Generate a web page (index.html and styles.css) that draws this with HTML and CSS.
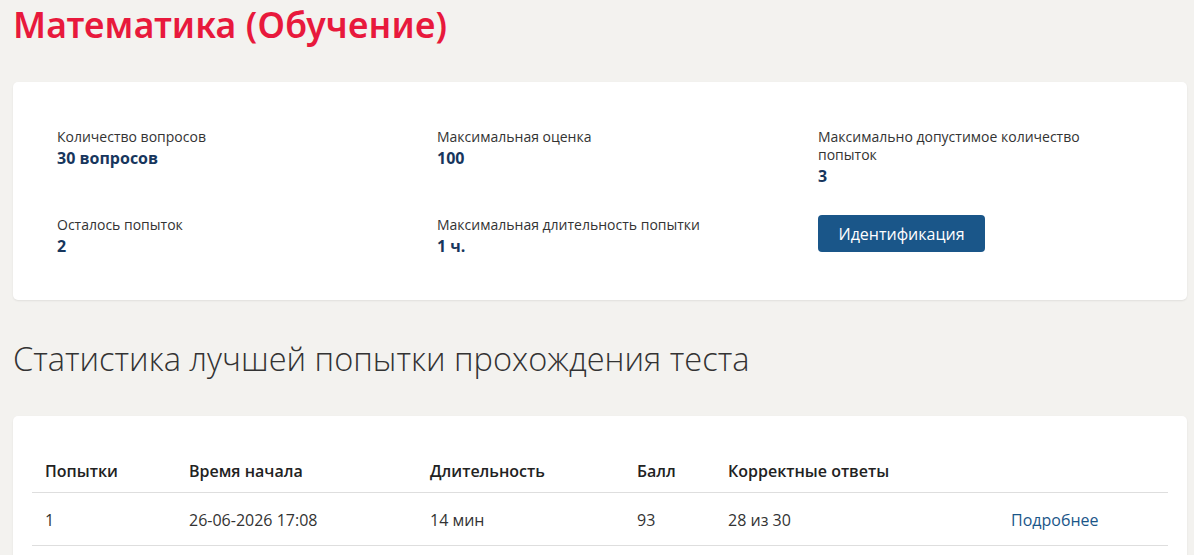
FILE: index.html
```html
<!DOCTYPE html>
<html lang="ru">
<head>
<meta charset="utf-8">
<title>Математика (Обучение)</title>
<link rel="stylesheet" href="styles.css">
</head>
<body>
<div class="page">
  <h1 class="title">Математика (Обучение)</h1>
  <section class="card info">
    <div class="info-grid">
      <div class="item">
        <div class="label">Количество вопросов</div>
        <div class="value">30 вопросов</div>
      </div>
      <div class="item">
        <div class="label">Максимальная оценка</div>
        <div class="value">100</div>
      </div>
      <div class="item">
        <div class="label">Максимально допустимое количество<br>попыток</div>
        <div class="value">3</div>
      </div>
      <div class="item">
        <div class="label">Осталось попыток</div>
        <div class="value">2</div>
      </div>
      <div class="item">
        <div class="label">Максимальная длительность попытки</div>
        <div class="value">1 ч.</div>
      </div>
      <div class="item item-btn">
        <button class="btn" type="button">Идентификация</button>
      </div>
    </div>
  </section>
  <h2 class="section-title">Статистика лучшей попытки прохождения теста</h2>
  <section class="card stats">
    <table class="table">
      <thead>
        <tr>
          <th class="c1">Попытки</th>
          <th class="c2">Время начала</th>
          <th class="c3">Длительность</th>
          <th class="c4">Балл</th>
          <th class="c5">Корректные ответы</th>
          <th class="c6"></th>
        </tr>
      </thead>
      <tbody>
        <tr>
          <td>1</td>
          <td>26-06-2026 17:08</td>
          <td>14 мин</td>
          <td>93</td>
          <td>28 из 30</td>
          <td><a class="more" href="#">Подробнее</a></td>
        </tr>
      </tbody>
    </table>
  </section>
</div>
</body>
</html>
```
FILE: styles.css
```css
* { box-sizing: border-box; }
html, body { margin: 0; padding: 0; }
body {
  background: #f3f2ef;
  font-family: "Open Sans", "Noto Sans", sans-serif;
  color: #333;
}
.page {
  padding: 0 7px 0 13px;
}
.title {
  margin: 0;
  padding-top: 2px;
  font-family: "Noto Sans", sans-serif;
  font-weight: 600;
  font-size: 35.6px;
  line-height: 44px;
  color: #e8193c;
  letter-spacing: 0.2px;
}
.card {
  background: #fff;
  border-radius: 5px;
  box-shadow: 0 1px 2px rgba(0,0,0,0.08);
}
.info {
  margin-top: 36px;
  height: 218px;
  padding: 46px 44px 0 44px;
}
.info-grid {
  display: grid;
  grid-template-columns: 380px 381px 1fr;
  row-gap: 30px;
}
.label {
  font-size: 14px;
  line-height: 18px;
  color: #333;
}
.value {
  margin-top: 2px;
  font-size: 16px;
  font-weight: 700;
  line-height: 20px;
  color: #17365d;
}
.item-btn { margin-top: -1px; }
.btn {
  font-family: inherit;
  font-size: 16px;
  color: #fff;
  background: #1a5689;
  border: 0;
  border-radius: 4px;
  width: 167px;
  height: 37px;
  padding: 0;
  cursor: pointer;
}
.section-title {
  margin: 0;
  padding-top: 38px;
  font-weight: 300;
  font-size: 32.6px;
  line-height: 42px;
  color: #333;
}
.stats {
  margin-top: 36px;
  padding: 34px 19px 0 19px;
  height: 150px;
}
.table {
  width: 100%;
  border-collapse: collapse;
  font-size: 16px;
}
.table th {
  text-align: left;
  font-weight: 600;
  color: #222;
  padding: 10px 13px 10px 13px;
  height: 41px;
  border-bottom: 1px solid #dedede;
}
.table td {
  padding: 2px 13px 0 13px;
  height: 53px;
  border-bottom: 1px solid #dedede;
  color: #333;
}
.c1 { width: 144px; }
.c2 { width: 241px; }
.c3 { width: 207px; }
.c4 { width: 91px; }
.c5 { width: 283px; }
.more {
  color: #1a5689;
  text-decoration: none;
}
```
